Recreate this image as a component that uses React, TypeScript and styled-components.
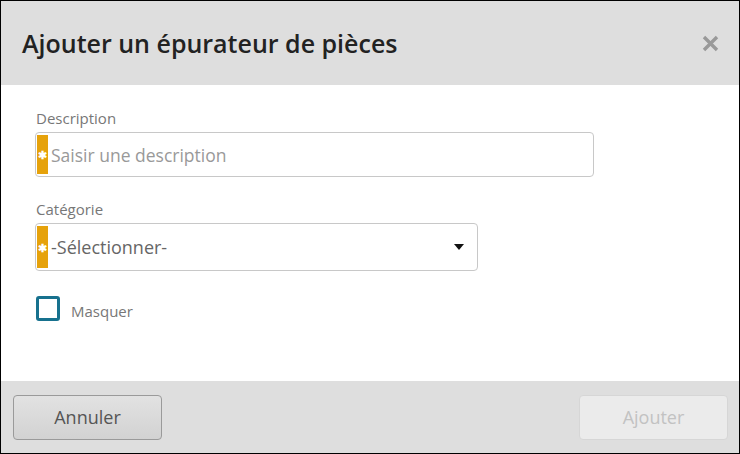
import React from "react";
import styled, { createGlobalStyle } from "styled-components";

const Global = createGlobalStyle`
  html, body { margin: 0; padding: 0; }
  body { font-family: "Open Sans", "Noto Sans", sans-serif; }
  * { box-sizing: border-box; }
`;

const Dialog = styled.div`
  width: 740px;
  height: 454px;
  border: 1px solid #000;
  display: flex;
  flex-direction: column;
  background: #fff;
`;

const Header = styled.div`
  height: 84px;
  flex: none;
  background: #dedede;
  display: flex;
  align-items: center;
  justify-content: space-between;
  padding: 0 19px 0 21px;
`;

const Title = styled.h1`
  margin: 0;
  font-size: 25px;
  font-weight: 600;
  color: #222;
`;

const Close = styled.button`
  border: none;
  background: none;
  padding: 0;
  width: 20px;
  height: 20px;
  display: flex;
  align-items: center;
  justify-content: center;
  cursor: pointer;
`;

const Body = styled.div`
  flex: 1;
  padding: 23px 0 0 34px;
  display: flex;
  flex-direction: column;
`;

const Field = styled.div<{ $mb: number }>`
  display: flex;
  flex-direction: column;
  gap: 4px;
  margin-bottom: ${(p) => p.$mb}px;
`;

const Label = styled.label`
  font-size: 15px;
  color: #777;
  line-height: 20px;
  padding-left: 1px;
`;

const Box = styled.div<{ $w: number; $h: number }>`
  position: relative;
  width: ${(p) => p.$w}px;
  height: ${(p) => p.$h}px;
  border: 1px solid #c8c8c8;
  border-radius: 4px;
  display: flex;
  align-items: center;
  padding: 2px 2px 2px 1px;
  background: #fff;
`;

const Required = styled.span`
  width: 11px;
  align-self: stretch;
  background: #e6a20b;
  flex: none;
  display: flex;
  align-items: center;
  justify-content: center;
  color: #fff;
  font-size: 11px;
  font-weight: 700;
  line-height: 1;
`;

const Input = styled.input`
  flex: 1;
  border: none;
  outline: none;
  font-family: "Open Sans", "Noto Sans", sans-serif;
  font-size: 17.5px;
  color: #333;
  padding: 0 0 0 3px;
  background: transparent;
  &::placeholder { color: #999; }
`;

const SelectText = styled.span`
  flex: 1;
  font-size: 18px;
  color: #666;
  padding-left: 3px;
`;

const Caret = styled.span`
  width: 0;
  height: 0;
  border-left: 5.5px solid transparent;
  border-right: 5.5px solid transparent;
  border-top: 6px solid #111;
  margin-right: 11px;
`;

const CheckRow = styled.label`
  display: flex;
  align-items: center;
  gap: 11px;
  padding-left: 1px;
  margin-top: 1px;
`;

const CheckBox = styled.span`
  width: 24px;
  height: 25px;
  border: 3px solid #17718e;
  border-radius: 3px;
  background: #fff;
`;

const CheckLabel = styled.span`
  font-size: 15px;
  color: #777;
  padding-top: 5px;
`;

const Footer = styled.div`
  height: 72px;
  flex: none;
  background: #dedede;
  display: flex;
  align-items: center;
  justify-content: space-between;
  padding: 0 11px 0 12px;
`;

const Button = styled.button<{ $disabled?: boolean }>`
  width: 149px;
  height: 45px;
  border-radius: 4px;
  font-family: "Open Sans", "Noto Sans", sans-serif;
  font-size: 18px;
  border: 1px solid ${(p) => (p.$disabled ? "#d6d6d6" : "#9a9a9a")};
  background: ${(p) =>
    p.$disabled ? "#ebebeb" : "linear-gradient(#e2e2e2, #d2d2d2)"};
  color: ${(p) => (p.$disabled ? "#c2c2c2" : "#555")};
  cursor: ${(p) => (p.$disabled ? "default" : "pointer")};
  padding: 0;
`;

export default function App() {
  return (
    <>
      <Global />
      <Dialog>
        <Header>
          <Title>Ajouter un épurateur de pièces</Title>
          <Close aria-label="Fermer">
            <svg width="17" height="17" viewBox="0 0 17 17">
              <path
                d="M2 2 L15 15 M15 2 L2 15"
                stroke="#999"
                strokeWidth="3.4"
                strokeLinecap="butt"
              />
            </svg>
          </Close>
        </Header>
        <Body>
          <Field $mb={22}>
            <Label>Description</Label>
            <Box $w={559} $h={45}>
              <Required>✱</Required>
              <Input placeholder="Saisir une description" />
            </Box>
          </Field>
          <Field $mb={24}>
            <Label>Catégorie</Label>
            <Box $w={443} $h={48}>
              <Required>✱</Required>
              <SelectText>-Sélectionner-</SelectText>
              <Caret />
            </Box>
          </Field>
          <CheckRow>
            <CheckBox />
            <CheckLabel>Masquer</CheckLabel>
          </CheckRow>
        </Body>
        <Footer>
          <Button>Annuler</Button>
          <Button $disabled disabled>
            Ajouter
          </Button>
        </Footer>
      </Dialog>
    </>
  );
}
